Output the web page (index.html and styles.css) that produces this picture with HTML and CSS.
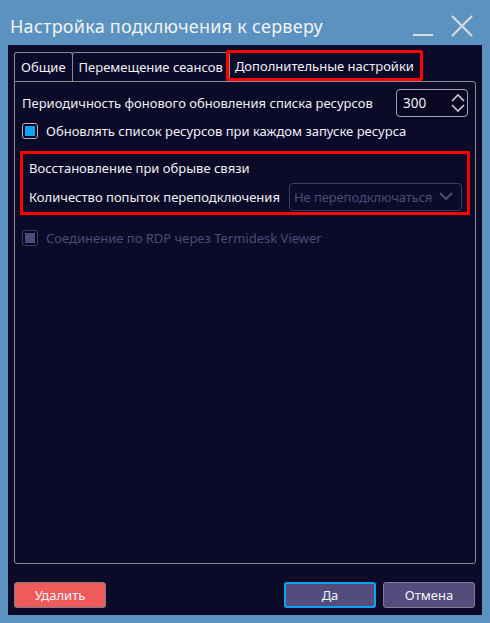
FILE: index.html
```html
<!DOCTYPE html>
<html lang="ru">
<head>
<meta charset="utf-8">
<link rel="stylesheet" href="styles.css">
</head>
<body>
<div class="frame">
  <div class="titlebar">
    <span class="title">Настройка подключения к серверу</span>
    <div class="wbtns">
      <svg class="wmin" width="20" height="20" viewBox="0 0 20 20"><line x1="0" y1="18" x2="20" y2="18" stroke="#d9dde2" stroke-width="2"/></svg>
      <svg class="wclose" width="22" height="22" viewBox="0 0 22 22"><path d="M1 1 L21 21 M21 1 L1 21" stroke="#d9dde2" stroke-width="2"/></svg>
    </div>
  </div>
  <div class="window">
    <div class="tabs">
      <div class="tab">Общие</div>
      <div class="tab">Перемещение сеансов</div>
      <div class="tab active">Дополнительные настройки</div>
    </div>
    <div class="panel">
      <div class="row r1">
        <span>Периодичность фонового обновления списка ресурсов</span>
        <div class="spin">
          <span>300</span>
          <svg width="14" height="20" viewBox="0 0 14 20"><path d="M1 8 L7 2 L13 8 M1 12 L7 18 L13 12" fill="none" stroke="#c9c9d2" stroke-width="1.6"/></svg>
        </div>
      </div>
      <label class="check">
        <span class="box"><span class="mark"></span></span>
        <span>Обновлять список ресурсов при каждом запуске ресурса</span>
      </label>
      <div class="group">
        <div class="gline">Восстановление при обрыве связи</div>
        <div class="gline grow">
          <span>Количество попыток переподключения</span>
          <div class="combo">
            <span>Не переподключаться</span>
            <svg width="14" height="9" viewBox="0 0 14 9"><path d="M1 1 L7 7 L13 1" fill="none" stroke="#4f4c7c" stroke-width="2"/></svg>
          </div>
        </div>
      </div>
      <label class="check disabled">
        <span class="box"><span class="mark"></span></span>
        <span>Соединение по RDP через Termidesk Viewer</span>
      </label>
    </div>
    <div class="buttons">
      <button class="btn del">Удалить</button>
      <span class="spacer"></span>
      <button class="btn ok">Да</button>
      <button class="btn">Отмена</button>
    </div>
  </div>
</div>
</body>
</html>
```
FILE: styles.css
```css
* { box-sizing: border-box; }
html, body { margin: 0; padding: 0; }
body {
  width: 490px; height: 623px;
  background: #5b92bf;
  font-family: "Noto Sans", "Open Sans", sans-serif;
  overflow: hidden;
}
.frame { display: flex; flex-direction: column; height: 623px; padding: 0 8px 8px 8px; }
.titlebar {
  height: 45px; display: flex; align-items: center; justify-content: space-between;
  padding: 6px 0 0 2px;
}
.title { color: #f2f4f6; font-size: 18px; letter-spacing: 0.25px; }
.wbtns { display: flex; align-items: center; gap: 18px; padding-right: 9px; }
.wmin { margin-top: 2px; }
.window {
  flex: 1; background: #0c0a29; display: flex; flex-direction: column;
  padding: 5px 7px 7px 6px;
  color: #f0f0f4; font-size: 13px;
}
.tabs { display: flex; height: 31px; align-items: flex-end; }
.tab {
  height: 29px; border: 1px solid #8a8a96; border-bottom: none;
  border-radius: 3px 3px 0 0; padding: 0 6px; display: flex; align-items: center;
  color: #f0f0f4; white-space: nowrap;
  margin-right: -1px;
}
.tab.active {
  height: 31px; margin-left: -3px; border: 3px solid #ff0000; border-radius: 2px;
  padding: 0 6px 0 6px;
}
.panel {
  flex: 1; border: 1px solid #8a8a96; border-radius: 0 3px 3px 3px;
  padding: 6px 7px; display: flex; flex-direction: column;
  width: 462px;
}
.row { display: flex; align-items: center; justify-content: space-between; }
.r1 { height: 30px; }
.spin {
  width: 72px; height: 28px; border: 1px solid #a3a3ad; border-radius: 4px;
  display: flex; align-items: center; justify-content: space-between;
  padding: 0 2px 0 6px; background: #090722; font-size: 13.5px;
}
.check { display: flex; align-items: center; gap: 8px; height: 26px; }
.box {
  width: 16px; height: 16px; border: 1px solid #b4b4bc; border-radius: 3px;
  display: flex; align-items: center; justify-content: center; background: #08061e;
}
.mark { width: 10px; height: 10px; background: #0aa4f3; }
.group {
  margin: 7px -2px 0 -2px; border: 3px solid #ff0000; height: 64px;
  padding: 0 5px 0 6px; display: flex; flex-direction: column; justify-content: center;
}
.gline { height: 27px; display: flex; align-items: center; white-space: nowrap; }
.grow { justify-content: space-between; height: 30px; }
.combo {
  width: 173px; height: 28px; border: 1px solid #3d3a66; border-radius: 4px;
  display: flex; align-items: center; justify-content: space-between;
  padding: 0 8px 0 4px; color: #4c4a78; font-size: 13px; letter-spacing: -0.1px; white-space: nowrap;
}
.check.disabled { margin-top: 10px; color: #4c4a78; }
.check.disabled .box { border-color: #3d3a66; }
.check.disabled .mark { background: #4c4a7c; }
.buttons { display: flex; gap: 7px; padding-top: 18px; padding-bottom: 0; }
.spacer { flex: 1; }
.btn {
  width: 92px; height: 26px; border: 1px solid #7f7f8c; border-radius: 3px;
  background: #534c7c; color: #f4f4f8; font-family: inherit; font-size: 13px;
  padding: 0;
}
.btn.del { background: #ef5b5b; }
.btn.ok { border: 2px solid #0aa4f3; }
```
